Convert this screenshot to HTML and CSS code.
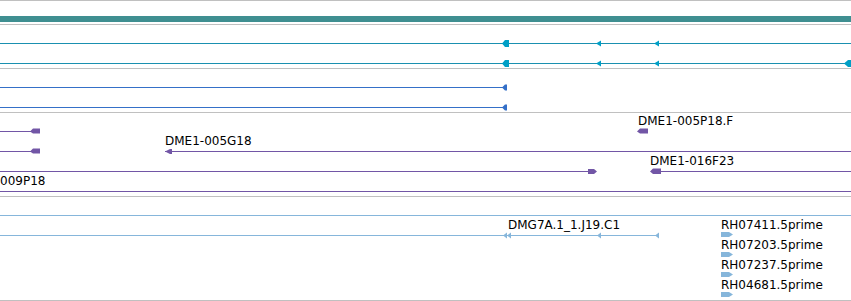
FILE: index.html
```html
<!DOCTYPE html>
<html lang="en">
<head>
<meta charset="UTF-8">
<title>Tracks</title>
<link rel="stylesheet" href="styles.css">
</head>
<body>

<div class="panel">
    <div class="ruler">
        <div class="overview-bar"></div>
    </div>

    <!-- transcripts -->
    <div class="track track-short">
        <svg class="lane" width="851" height="43">
            <rect class="cyan" x="0" y="18" width="851" height="1"/>
            <polygon class="cyan-head" points="502,18.5 505,15 509,15 509,22 505,22"/>
            <polygon class="cyan-head" points="596,18.5 601,15.5 601,21.5"/>
            <polygon class="cyan-head" points="654,18.5 659,15.5 659,21.5"/>

            <rect class="cyan" x="0" y="38" width="851" height="1"/>
            <polygon class="cyan-head" points="502,38.5 505,35 509,35 509,42 505,42"/>
            <polygon class="cyan-head" points="596,38.5 601,35.5 601,41.5"/>
            <polygon class="cyan-head" points="654,38.5 659,35.5 659,41.5"/>
            <polygon class="cyan-head" points="844,38.5 848,35 851,35 851,42 848,42"/>
        </svg>
    </div>

    <div class="track track-short">
        <svg class="lane" width="851" height="43">
            <rect class="blue" x="0" y="18" width="507" height="1"/>
            <polygon class="blue" points="502,18.5 505,15.5 507,15.5 507,21.5 505,21.5"/>
            <rect class="blue" x="0" y="38" width="507" height="1"/>
            <polygon class="blue" points="502,38.5 505,35.5 507,35.5 507,41.5 505,41.5"/>
        </svg>
    </div>

    <!-- BAC ends -->
    <div class="track track-mid">
        <svg class="lane" width="851" height="83">
            <rect class="purple" x="0" y="18" width="33" height="1"/>
            <polygon class="purple" points="30,18.5 33,15.5 40,15.5 40,20.5 33,20.5"/>
            <text class="label" x="638" y="12">DME1-005P18.F</text>
            <polygon class="purple" points="637,18.5 640,15.5 648,15.5 648,20.5 640,20.5"/>

            <rect class="purple" x="0" y="38" width="33" height="1"/>
            <polygon class="purple" points="30,38.5 33,35.5 40,35.5 40,40.5 33,40.5"/>
            <text class="label" x="165" y="32">DME1-005G18</text>
            <rect class="purple" x="165" y="38" width="686" height="1"/>
            <polygon class="purple" points="165,38.5 170,36 172,36 172,41 170,41"/>

            <rect class="purple" x="0" y="58" width="592" height="1"/>
            <polygon class="purple" points="588,56 594,56 597,58.5 594,61 588,61"/>
            <text class="label" x="650" y="52">DME1-016F23</text>
            <polygon class="purple" points="650,58.5 653,55.5 661,55.5 661,61 653,61"/>
            <rect class="purple" x="660" y="58" width="191" height="1"/>

            <text class="label" x="0" y="72">009P18</text>
            <rect class="purple" x="0" y="78" width="851" height="1"/>
        </svg>
    </div>

    <!-- cDNA / ESTs -->
    <div class="track track-tall">
        <svg class="lane" width="851" height="103">
            <rect class="sky" x="0" y="18" width="851" height="1"/>

            <rect class="sky" x="0" y="38" width="659" height="1"/>
            <polygon class="sky" points="503,38.5 507,35.5 507,41.5"/>
            <polygon class="sky" points="507,38.5 511,35.5 511,41.5"/>
            <polygon class="sky" points="597,38.5 601,35.5 601,41.5"/>
            <polygon class="sky" points="655,38.5 659,35.5 659,41.5"/>
            <text class="label" x="508" y="32">DMG7A.1_1.J19.C1</text>

            <text class="label" x="721" y="32">RH07411.5prime</text>
            <polygon class="sky" points="721,35 729,35 733,37.5 729,40 721,40"/>
            <text class="label" x="721" y="52">RH07203.5prime</text>
            <polygon class="sky" points="721,55 729,55 733,57.5 729,60 721,60"/>
            <text class="label" x="721" y="72">RH07237.5prime</text>
            <polygon class="sky" points="721,75 729,75 733,77.5 729,80 721,80"/>
            <text class="label" x="721" y="92">RH04681.5prime</text>
            <polygon class="sky" points="721,95 729,95 733,97.5 729,100 721,100"/>
        </svg>
    </div>
</div>

</body>
</html>
```

FILE: styles.css
```css
body {
    margin: 0;
    padding: 0;
    background-color: #fff;
    font-family: "DejaVu Sans", sans-serif;
    overflow: hidden;
}

.panel {
    width: 851px;
    border-top: 1px solid #c0c0c0;
}

.ruler {
    height: 23px;
    padding-top: 15px;
    box-sizing: border-box;
}

.overview-bar {
    height: 6px;
    background-color: #3f8f91;
}

.track {
    border-top: 1px solid #c0c0c0;
}

.track-short {
    height: 43px;
}

.track-mid {
    height: 83px;
}

.track-tall {
    height: 103px;
    border-bottom: 1px solid #c0c0c0;
}

.lane {
    display: block;
    overflow: hidden;
}

.lane rect {
    shape-rendering: crispEdges;
}

.cyan {
    fill: #1a90b0;
}

.cyan-head {
    fill: #009fc6;
}

.blue {
    fill: #3570c8;
}

.purple {
    fill: #7256a6;
}

.sky {
    fill: #86b6db;
}

.label {
    font-family: "DejaVu Sans", sans-serif;
    font-size: 12px;
    fill: #000;
}
```
